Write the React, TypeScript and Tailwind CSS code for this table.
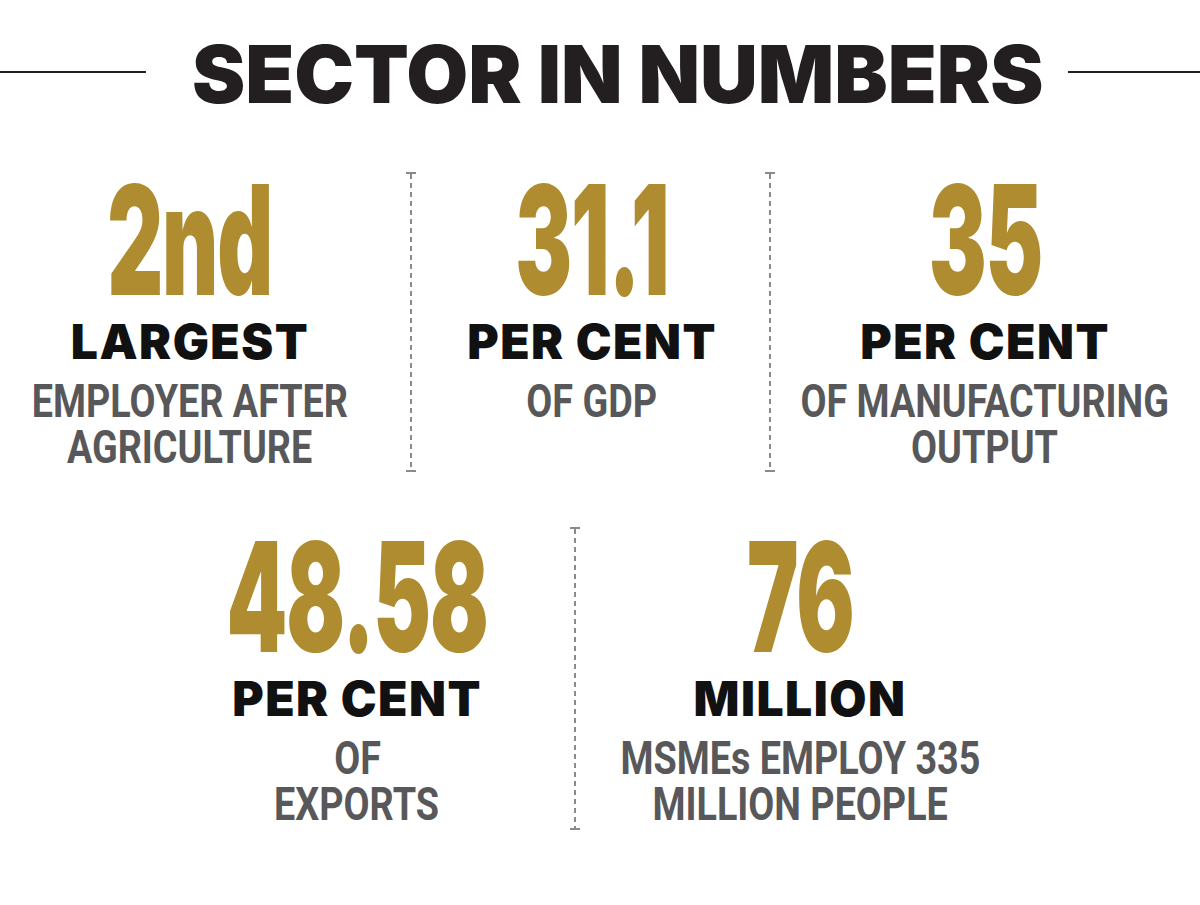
import React from "react";

const GOLD = "text-[#b08c30]";

function Divider({ className }: { className: string }) {
  return (
    <div className={"flex flex-col items-center " + className}>
      <div className="h-[2px] w-[10px] bg-[#8a8a8a]" />
      <div className="w-[2px] flex-1 bg-[repeating-linear-gradient(to_bottom,#8a8a8a_0_5px,transparent_5px_9px)]" />
      <div className="h-[2px] w-[10px] bg-[#8a8a8a]" />
    </div>
  );
}

function Stat({
  value,
  valueScale,
  label,
  lines,
  topGap,
}: {
  value: string;
  valueScale: string;
  label: string;
  lines: string[];
  topGap: string;
}) {
  return (
    <div className="flex flex-col items-center">
      <div className={"h-[110px] whitespace-nowrap text-[152px] font-black leading-[110px] tracking-[-2px] " + GOLD + " " + topGap}>
        <span className={"inline-block " + valueScale}>{value}</span>
      </div>
      <div className="mt-[27px] h-[40px] whitespace-nowrap text-[48px] font-black leading-[40px] tracking-[1.5px] text-[#111]">
        {label}
      </div>
      <div className="mt-[16px] flex flex-col items-center text-[46px] font-bold leading-[46px] text-[#58585a] [font-family:Roboto,sans-serif]">
        {lines.map((l) => (
          <span key={l} className="inline-block whitespace-nowrap scale-x-[0.82]">
            {l}
          </span>
        ))}
      </div>
    </div>
  );
}

export default function App() {
  return (
    <div className="h-[905px] w-[1200px] overflow-hidden bg-white [font-family:Inter,sans-serif]">
      <div className="flex h-[104px] items-end">
        <div className="mb-[31px] h-[2px] w-[146px] bg-[#231f20]" />
        <h1 className="ml-[46px] h-[60px] whitespace-nowrap text-[80px] font-black leading-[60px] text-[#231f20]">
          SECTOR IN NUMBERS
        </h1>
        <div className="mb-[31px] ml-[25px] h-[2px] flex-1 bg-[#231f20]" />
      </div>

      <div className="mt-[68px] flex h-[300px]">
        <div className="w-[380px]">
          <Stat
            value="2nd"
            valueScale="scale-x-[0.57]"
            label="LARGEST"
            lines={["EMPLOYER AFTER", "AGRICULTURE"]}
            topGap="mt-[13px]"
          />
        </div>
        <Divider className="w-[62px]" />
        <div className="w-[300px]">
          <Stat
            value="31.1"
            valueScale="scale-x-[0.56]"
            label="PER CENT"
            lines={["OF GDP"]}
            topGap="mt-[13px]"
          />
        </div>
        <Divider className="w-[56px]" />
        <div className="w-[374px]">
          <Stat
            value="35"
            valueScale="scale-x-[0.57]"
            label="PER CENT"
            lines={["OF MANUFACTURING", "OUTPUT"]}
            topGap="mt-[13px]"
          />
        </div>
      </div>

      <div className="mt-[55px] flex h-[303px]">
        <div className="ml-[159px] w-[396px]">
          <Stat
            value="48.58"
            valueScale="scale-x-[0.57]"
            label="PER CENT"
            lines={["OF", "EXPORTS"]}
            topGap="mt-[15px]"
          />
        </div>
        <Divider className="w-[40px]" />
        <div className="w-[410px]">
          <Stat
            value="76"
            valueScale="scale-x-[0.57]"
            label="MILLION"
            lines={["MSMEs EMPLOY 335", "MILLION PEOPLE"]}
            topGap="mt-[15px]"
          />
        </div>
      </div>
    </div>
  );
}
